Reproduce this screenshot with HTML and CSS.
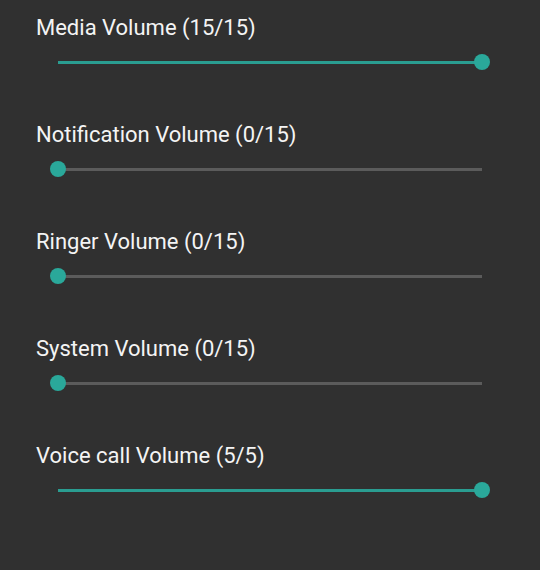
FILE: index.html
```html
<!DOCTYPE html>
<html>
<head>
<meta charset="utf-8">
<link rel="stylesheet" href="styles.css">
</head>
<body>
<div class="list">
  <div class="item">
    <div class="label">Media Volume (15/15)</div>
    <div class="slider">
      <div class="track"><div class="fill" style="width:100%"></div></div>
      <div class="thumb" style="left:calc(100% - 16px)"></div>
    </div>
  </div>
  <div class="item">
    <div class="label">Notification Volume (0/15)</div>
    <div class="slider">
      <div class="track"><div class="fill" style="width:0%"></div></div>
      <div class="thumb" style="left:0"></div>
    </div>
  </div>
  <div class="item">
    <div class="label">Ringer Volume (0/15)</div>
    <div class="slider">
      <div class="track"><div class="fill" style="width:0%"></div></div>
      <div class="thumb" style="left:0"></div>
    </div>
  </div>
  <div class="item">
    <div class="label">System Volume (0/15)</div>
    <div class="slider">
      <div class="track"><div class="fill" style="width:0%"></div></div>
      <div class="thumb" style="left:0"></div>
    </div>
  </div>
  <div class="item">
    <div class="label">Voice call Volume (5/5)</div>
    <div class="slider">
      <div class="track"><div class="fill" style="width:100%"></div></div>
      <div class="thumb" style="left:calc(100% - 16px)"></div>
    </div>
  </div>
</div>
</body>
</html>
```
FILE: styles.css
```css
html, body {
  margin: 0;
  padding: 0;
  background: #303030;
  width: 540px;
  height: 570px;
  overflow: hidden;
}
.list {
  display: flex;
  flex-direction: column;
  padding-top: 16px;
}
.item {
  height: 107px;
  display: flex;
  flex-direction: column;
}
.label {
  font-family: Roboto, "Noto Sans", sans-serif;
  font-size: 22px;
  line-height: 24px;
  color: #f4f4f4;
  padding-left: 36px;
}
.slider {
  position: relative;
  margin: 14px 0 0 50px;
  width: 440px;
  height: 16px;
  display: flex;
  align-items: center;
}
.track {
  flex: 1;
  margin: 0 8px;
  height: 3px;
  background: #5b5b5b;
  display: flex;
}
.fill {
  height: 100%;
  background: #2a9d91;
}
.thumb {
  position: absolute;
  top: 0;
  width: 16px;
  height: 16px;
  border-radius: 50%;
  background: #2aa89a;
}
```
